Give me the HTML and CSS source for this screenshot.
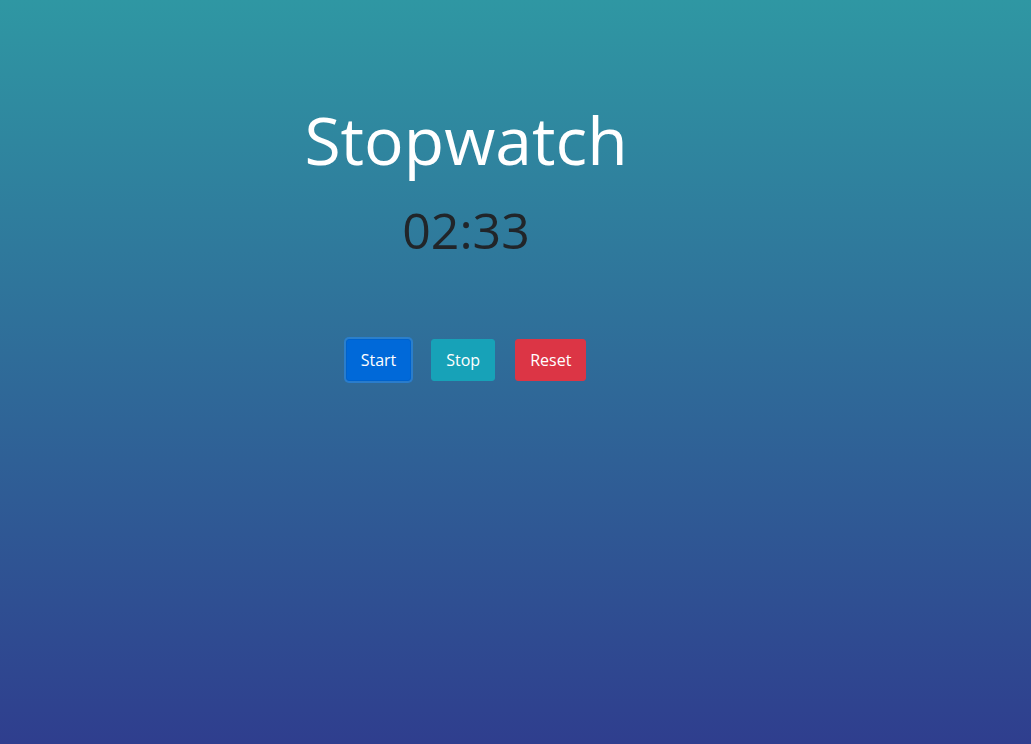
FILE: index.html
```html
<!DOCTYPE html>
<html>
<head>
<meta charset="utf-8">
<link rel="stylesheet" href="styles.css">
</head>
<body>
<main class="watch">
  <h1 class="title">Stopwatch</h1>
  <div class="time">02:33</div>
  <div class="controls">
    <button class="btn btn-start">Start</button>
    <button class="btn btn-stop">Stop</button>
    <button class="btn btn-reset">Reset</button>
  </div>
</main>
</body>
</html>
```
FILE: styles.css
```css
html, body {
  margin: 0;
  height: 100%;
}
body {
  background: linear-gradient(to bottom, #2f97a3 0%, #2f3e8e 100%);
  font-family: "Open Sans", "Noto Sans", sans-serif;
  overflow: hidden;
}
.watch {
  width: 400px;
  margin-left: 266px;
  padding-top: 94px;
  display: flex;
  flex-direction: column;
  align-items: center;
}
.title {
  margin: 0;
  font-size: 66px;
  font-weight: 400;
  line-height: 90px;
  color: #ffffff;
}
.time {
  margin-top: 11px;
  font-size: 50px;
  line-height: 70px;
  color: #212529;
}
.controls {
  margin-top: 74px;
  display: flex;
  gap: 20px;
  align-items: center;
}
.btn {
  font-family: inherit;
  font-size: 16px;
  color: #fff;
  border: 1px solid transparent;
  border-radius: 3px;
  height: 42px;
  padding: 0 14px;
  cursor: pointer;
}
.btn-start {
  background: #0069d9;
  border-color: #0062cc;
  box-shadow: 0 0 0 2px rgba(38, 143, 255, 0.5);
}
.btn-stop {
  background: #17a2b8;
  border-color: #17a2b8;
}
.btn-reset {
  background: #dc3545;
  border-color: #dc3545;
}
```
